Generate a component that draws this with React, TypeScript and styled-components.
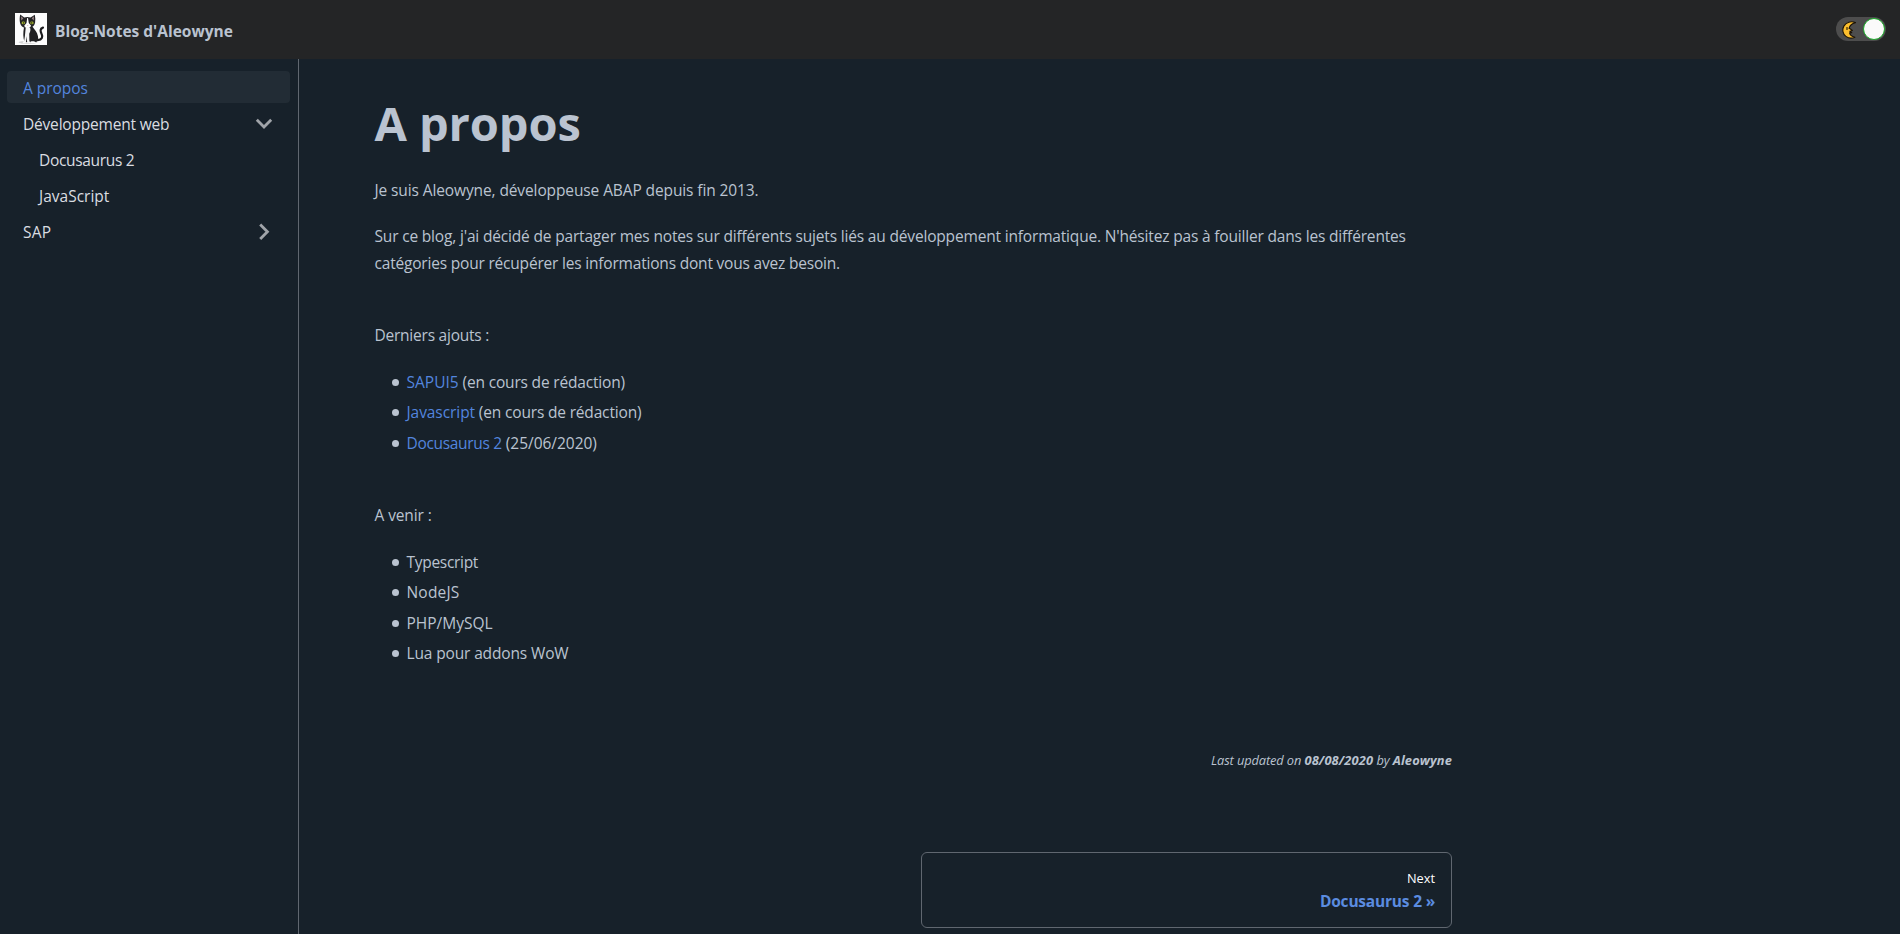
import React from 'react';
import styled, { createGlobalStyle } from 'styled-components';

const GlobalStyle = createGlobalStyle`
  *, *::before, *::after { box-sizing: border-box; }
  html, body { margin: 0; height: 100%; }
  body {
    background: #17212a;
    color: #bac3d0;
    font-family: 'Open Sans', 'Noto Sans', sans-serif;
    font-size: 15.5px;
    line-height: 26.4px;
    overflow: hidden;
  }
`;

const Page = styled.div`
  display: flex;
  flex-direction: column;
  height: 934px;
  overflow: hidden;
`;

const Navbar = styled.header`
  display: flex;
  align-items: center;
  justify-content: space-between;
  flex: 0 0 59px;
  padding: 0 14px 1px 15px;
  background: #242526;
`;

const Brand = styled.a`
  display: flex;
  align-items: center;
  gap: 8px;
  color: #bac3d0;
  font-weight: 700;
  text-decoration: none;
`;

const BrandName = styled.span`
  padding-top: 4px;
`;

const Toggle = styled.button`
  display: flex;
  align-items: center;
  justify-content: space-between;
  width: 50px;
  height: 24px;
  padding: 0 1px 0 5px;
  border: 0;
  border-radius: 12px;
  background: #4d4d4d;
`;

const Thumb = styled.span`
  width: 22px;
  height: 22px;
  border: 1px solid #19ab27;
  border-radius: 50%;
  background: #fafafa;
`;

const Body = styled.div`
  display: flex;
  flex: 1;
  min-height: 0;
`;

const Sidebar = styled.nav`
  display: flex;
  flex-direction: column;
  gap: 4px;
  flex: 0 0 299px;
  padding: 12px 8px 0 7px;
  border-right: 1px solid #606770;
`;

const MenuItem = styled.a<{ $active?: boolean; $nested?: boolean; $track?: number }>`
  display: flex;
  align-items: center;
  justify-content: space-between;
  height: 32px;
  padding: 3px 17px 0 ${(p) => (p.$nested ? 32 : 16)}px;
  border-radius: 4px;
  background: ${(p) => (p.$active ? '#222c35' : 'transparent')};
  color: ${(p) => (p.$active ? '#5385de' : '#dadde1')};
  letter-spacing: ${(p) => p.$track ?? 0}px;
`;

const Content = styled.main`
  width: 1153px;
  padding: 32.8px 0 0 75.5px;
`;

const Title = styled.h1`
  margin: 0 0 25px;
  padding-top: 1.5px;
  height: 60px;
  font-size: 47px;
  line-height: 60px;
  font-weight: 700;
  letter-spacing: -0.1px;
`;

const Paragraph = styled.p<{ $track?: number; $spaced?: boolean }>`
  margin: ${(p) => (p.$spaced ? 46.4 : 0)}px 0 20px;
  letter-spacing: ${(p) => p.$track ?? 0}px;
`;

const Run = styled.span<{ $track?: number }>`
  display: block;
  white-space: nowrap;
  letter-spacing: ${(p) => p.$track ?? 0}px;
`;

const List = styled.ul`
  display: flex;
  flex-direction: column;
  gap: 4px;
  margin: 0 0 20px;
  padding: 0 0 0 16.5px;
  list-style: none;
`;

const Item = styled.li<{ $track?: number }>`
  display: flex;
  align-items: center;
  letter-spacing: ${(p) => p.$track ?? 0}px;
  white-space: pre;

  &::before {
    content: '';
    width: 7px;
    height: 7px;
    margin: 0.5px 7.5px 0 1px;
    border-radius: 50%;
    background: #bac3d0;
  }
`;

const Link = styled.a<{ $track?: number }>`
  color: #5385de;
  text-decoration: none;
  letter-spacing: ${(p) => (p.$track === undefined ? 'inherit' : `${p.$track}px`)};
`;

const Updated = styled.div`
  margin-top: 80.2px;
  text-align: right;
  font-size: 12.85px;
  line-height: 26px;
  font-style: italic;
  letter-spacing: -0.12px;

  b {
    letter-spacing: 0.13px;
  }
`;

const Pagination = styled.nav`
  display: flex;
  justify-content: flex-end;
  margin-top: 79px;
`;

const NextCard = styled.a`
  width: 531px;
  height: 76px;
  padding: 14px 16px;
  border: 1px solid #606770;
  border-radius: 6px;
  text-align: right;
`;

const NextLabel = styled.div`
  color: #fff;
  font-size: 12.8px;
  line-height: 22px;
`;

const NextTitle = styled.div`
  color: #5b8ce0;
  font-weight: 700;
  line-height: 25px;
  letter-spacing: -0.2px;
`;

const CatLogo = () => (
  <svg width="32" height="32" viewBox="0 0 32 32">
    <rect width="32" height="32" fill="#fdfdfd" />
    <ellipse cx="13" cy="29.3" rx="9.5" ry="1.6" fill="#d4d4d4" />
    <path d="M22.6 27.2c4.6-.6 5.4-3.4 4-6.2-1.3-2.8-1.8-5.4 1.4-6.4" fill="none" stroke="#1c1c1e" strokeWidth="2.2" strokeLinecap="round" />
    <path d="M9 14.5c-1 5-1 10 .5 14.5h10.200c3.400.4 3.800-3 3.200-6-.7-3.800-3.300-6.500-5.200-9z" fill="#202022" />
    <path d="M5.200 1.600l4 2.800c2-.7 4.200-.7 6.300 0l4.300-2.700c.6 2.600.7 5.200.3 7.800-.6 3.700-3.700 5.900-7.300 6-3.700 0-7-2.100-7.800-5.700-.5-2.700-.4-5.600.2-8.200z" fill="#232325" />
    <path d="M6 3.200l2.300 2-1.900 2.400zM19 3.300l-2.300 1.900 2 2.300z" fill="#9b8587" />
    <path d="M12.200 5h.8l.8 4.900 2.300 2.900c-.7 1.700-1.900 2.400-3.500 2.400s-2.900-.7-3.400-2.400l2.300-2.900z" fill="#fff" />
    <path d="M10.700 14.800h4.400c.7 2.200.2 4.200-.9 6l.2 7.500c.9.500 1.100 1.600.2 2H12.200l-.5-7-.9 7H8.300c-1-.5-.4-1.700.8-2.200l.8-5z" fill="#f7f7f7" />
    <path d="M15.500 28.500c2-.5 4.200-.4 5 .5.200.6-.2 1-1 1.100h-3.800z" fill="#fff" />
    <ellipse cx="8.300" cy="9.900" rx="1.700" ry="1.300" fill="#a5b52f" />
    <ellipse cx="16.900" cy="9.900" rx="1.700" ry="1.300" fill="#a5b52f" />
    <circle cx="8.500" cy="9.900" r=".7" fill="#161616" />
    <circle cx="16.700" cy="9.900" r=".7" fill="#161616" />
    <path d="M12 12.200h1.500l-.7.900z" fill="#b97f7f" />
  </svg>
);

const MoonIcon = () => (
  <svg width="16" height="20" viewBox="0 0 16 20">
    <path
      d="M14.500 3.600C10 1.800 5.200 3.200 3 6.900.9 10.500 1.700 15 4.900 17.400c2.600 1.900 6 2.200 9 .8-3.200-.7-4.900-2.300-5.300-4.300l2.200-.3-2-1.300 2.600-.8-2.300-1.800-1-.3c.6-2.700 2.800-4.900 6.400-5.800z"
      fill="#fdbf2d"
      stroke="#1c1408"
      strokeWidth="1.1"
      strokeLinejoin="round"
    />
    <path d="M6 8.600v1.800" stroke="#1c1408" strokeWidth="1.1" strokeLinecap="round" />
  </svg>
);

const ChevronSvg = styled.svg`
  margin-top: -2px;
`;

const Chevron = ({ open }: { open?: boolean }) => (
  <ChevronSvg width="18" height="18" viewBox="0 0 18 18" fill="none" stroke="#a0a4a9" strokeWidth="2.8">
    <path d={open ? 'M1.800 4.800L9 12 16.200 4.800' : 'M5.200 1.600L12.400 8.800 5.200 16'} />
  </ChevronSvg>
);

export default function App() {
  return (
    <Page>
      <GlobalStyle />
      <Navbar>
        <Brand>
          <CatLogo />
          <BrandName>Blog-Notes d'Aleowyne</BrandName>
        </Brand>
        <Toggle aria-label="Dark mode">
          <MoonIcon />
          <Thumb />
        </Toggle>
      </Navbar>
      <Body>
        <Sidebar>
          <MenuItem $active $track={-0.05}>A propos</MenuItem>
          <MenuItem $track={-0.19}>
            Développement web
            <Chevron open />
          </MenuItem>
          <MenuItem $nested $track={-0.32}>Docusaurus 2</MenuItem>
          <MenuItem $nested>JavaScript</MenuItem>
          <MenuItem $track={0.2}>
            SAP
            <Chevron />
          </MenuItem>
        </Sidebar>
        <Content>
          <Title>A propos</Title>
          <Paragraph $track={-0.11}>Je suis Aleowyne, développeuse ABAP depuis fin 2013.</Paragraph>
          <Paragraph>
            <Run $track={-0.173}>
              Sur ce blog, j'ai décidé de partager mes notes sur différents sujets liés au développement informatique. N'hésitez pas à fouiller dans les différentes
            </Run>
            <Run $track={-0.195}>catégories pour récupérer les informations dont vous avez besoin.</Run>
          </Paragraph>
          <Paragraph $spaced $track={-0.23}>Derniers ajouts :</Paragraph>
          <List>
            <Item $track={-0.18}><Link $track={0.02}>SAPUI5</Link> (en cours de rédaction)</Item>
            <Item $track={-0.17}><Link $track={-0.07}>Javascript</Link> (en cours de rédaction)</Item>
            <Item $track={-0.03}><Link $track={-0.32}>Docusaurus 2</Link> (25/06/2020)</Item>
          </List>
          <Paragraph $spaced $track={-0.1}>A venir :</Paragraph>
          <List>
            <Item $track={-0.3}>Typescript</Item>
            <Item $track={0.2}>NodeJS</Item>
            <Item>PHP/MySQL</Item>
            <Item $track={-0.14}>Lua pour addons WoW</Item>
          </List>
          <Updated>
            Last updated on <b>08/08/2020</b> by <b>Aleowyne</b>
          </Updated>
          <Pagination>
            <NextCard>
              <NextLabel>Next</NextLabel>
              <NextTitle>Docusaurus 2 »</NextTitle>
            </NextCard>
          </Pagination>
        </Content>
      </Body>
    </Page>
  );
}
